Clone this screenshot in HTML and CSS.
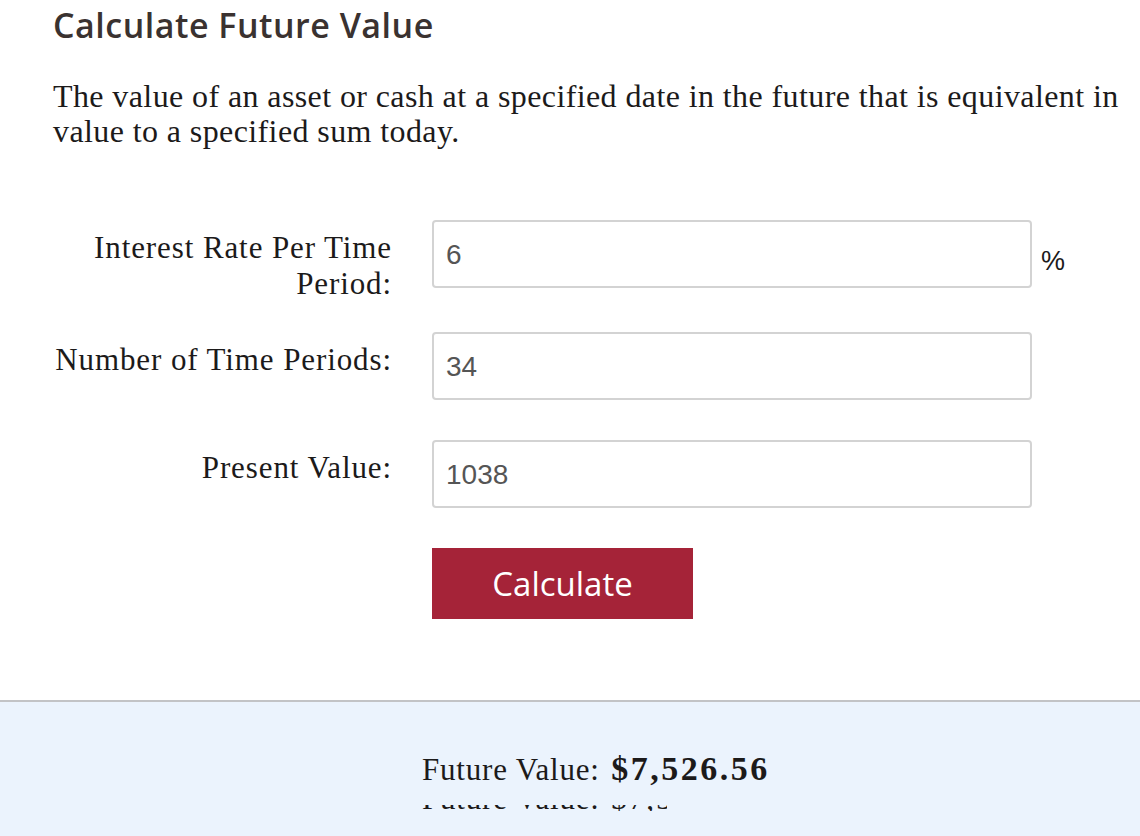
FILE: index.html
```html
<!DOCTYPE html>
<html>
<head>
<meta charset="utf-8">
<link rel="stylesheet" href="styles.css">
</head>
<body>
<div class="main">
  <h1 class="title">Calculate Future Value</h1>
  <p class="intro">The value of an asset or cash at a specified date in the future that is equivalent in value to a specified sum today.</p>
  <form class="form">
    <div class="row row-tall">
      <label class="label">Interest Rate Per Time<br>Period:</label>
      <div class="field">6</div>
      <span class="unit">%</span>
    </div>
    <div class="row">
      <label class="label">Number of Time Periods:</label>
      <div class="field">34</div>
    </div>
    <div class="row">
      <label class="label">Present Value:</label>
      <div class="field">1038</div>
    </div>
    <div class="row row-btn">
      <span class="label"></span>
      <button type="button" class="btn">Calculate</button>
    </div>
  </form>
</div>
<div class="result">
  <div class="result-line">Future Value: <strong class="amount">$7,526.56</strong></div>
  <div class="clip"><div class="clip-inner">Future Value: <span class="clip-amount">$7,526.56</span></div></div>
</div>
</body>
</html>
```

FILE: styles.css
```css
html, body {
  margin: 0;
  padding: 0;
  background: #ffffff;
}
body {
  width: 1140px;
  height: 836px;
  overflow: hidden;
  font-family: "Liberation Serif", "Times New Roman", serif;
  color: #1c1a1a;
}
.main {
  padding: 0 0 0 53px;
  height: 700px;
  box-sizing: border-box;
}
.title {
  margin: 0;
  padding-top: 5px;
  font-family: "Open Sans", "Noto Sans", sans-serif;
  font-weight: 600;
  font-size: 34px;
  line-height: 40px;
  color: #3a3230;
  letter-spacing: 0.5px;
}
.intro {
  margin: 34px 0 0 0;
  font-size: 32px;
  line-height: 35px;
  letter-spacing: 0.4px;
  color: #1c1a1a;
  width: 1085px;
}
.form {
  margin-top: 71px;
}
.row {
  display: flex;
  align-items: flex-start;
  margin-bottom: 40px;
}
.row-tall {
  margin-bottom: 30px;
}
.label {
  width: 339px;
  margin-right: 40px;
  text-align: right;
  font-size: 31px;
  line-height: 36px;
  letter-spacing: 0.9px;
  padding-top: 10px;
  color: #1c1a1a;
}
.field {
  width: 600px;
  height: 68px;
  box-sizing: border-box;
  border: 2px solid #d3d3d3;
  border-radius: 4px;
  padding: 0 12px;
  font-family: "Liberation Sans", Arial, sans-serif;
  font-size: 28px;
  line-height: 66px;
  color: #555555;
  background: #fff;
}
.unit {
  margin-left: 9px;
  padding-top: 23px;
  font-family: "Liberation Sans", Arial, sans-serif;
  font-size: 27px;
  line-height: 36px;
  color: #1c1a1a;
}
.row-btn {
  margin-top: 2px;
}
.row-btn .label {
  padding: 0;
}
.btn {
  width: 261px;
  height: 71px;
  border: none;
  border-radius: 0;
  background: #a52338;
  color: #ffffff;
  font-family: "Open Sans", "Noto Sans", sans-serif;
  font-size: 33px;
  font-weight: 500;
  padding: 0;
  margin: 0;
  cursor: pointer;
}
.result {
  border-top: 2px solid #c2c3c6;
  background: #ebf3fd;
  height: 136px;
  padding-left: 422px;
  box-sizing: border-box;
  padding-top: 47px;
}
.result-line {
  font-size: 31px;
  line-height: 40px;
  letter-spacing: 0.8px;
  color: #1c1a1a;
}
.amount {
  font-size: 34px;
  font-weight: 700;
  letter-spacing: 2.5px;
  margin-left: 3px;
}
.clip {
  width: 245px;
  height: 6px;
  overflow: hidden;
  margin-top: 15px;
}
.clip-inner {
  font-size: 31px;
  line-height: 6px;
  letter-spacing: 0.8px;
  margin-top: -9px;
  white-space: nowrap;
  color: #1c1a1a;
}
.clip-amount {
  font-size: 31px;
  font-weight: 400;
  letter-spacing: 2px;
  margin-left: 3px;
}
```
